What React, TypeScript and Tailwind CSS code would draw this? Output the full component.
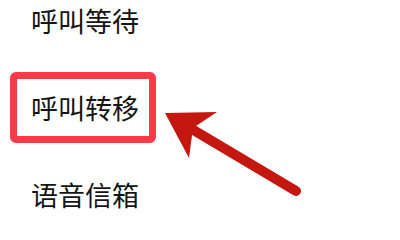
import React from "react";

export default function App() {
  const font = { fontFamily: '"Noto Sans CJK SC", "Noto Sans", sans-serif' };
  return (
    <div
      className="relative w-[400px] h-[213px] overflow-hidden bg-white flex flex-col text-[#141414]"
      style={font}
    >
      <div className="pt-[7px] pl-[31px] text-[27px] leading-[27px]">呼叫等待</div>
      <div className="mt-[38px] ml-[10px] w-[146px] h-[71px] border-[7px] border-[#f93a48] rounded-[6px] flex items-center pl-[14px]">
        <span className="text-[27px] leading-[27px]">呼叫转移</span>
      </div>
      <div className="mt-[38px] pl-[31px] text-[27px] leading-[27px]">语音信箱</div>

      <svg
        className="absolute left-0 top-0"
        width="400"
        height="213"
        viewBox="0 0 400 213"
      >
        <line
          x1="185"
          y1="125"
          x2="296"
          y2="191"
          stroke="#c4170f"
          strokeWidth="10"
          strokeLinecap="round"
        />
        <polygon
          points="165,113 217,112 193,128 189,158"
          fill="#c4170f"
        />
      </svg>
    </div>
  );
}
